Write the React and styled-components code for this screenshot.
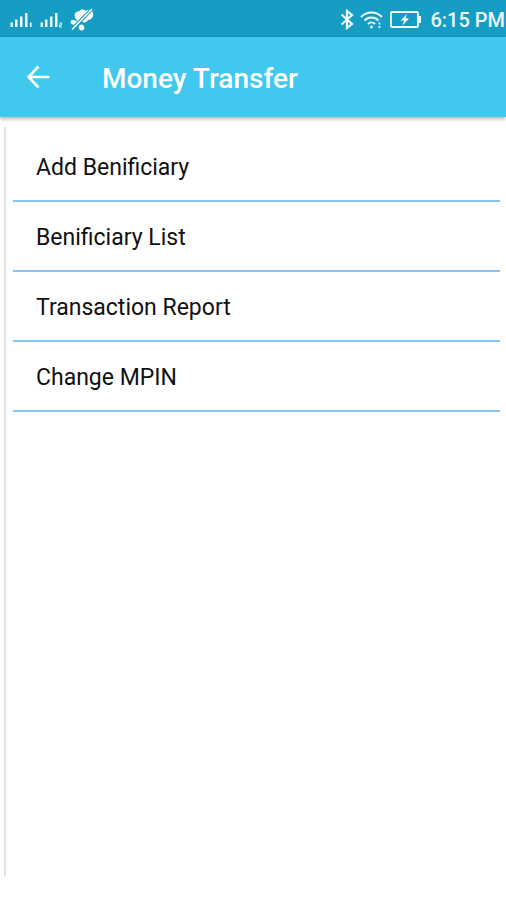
import React from 'react';
import styled, { createGlobalStyle, ThemeProvider } from 'styled-components';

let theme = {
  status: '#159dc3',
  primary: '#40c8ee',
  line: '#85c5f3',
  rule: '#e2e2e2',
  text: '#111',
};

let color = name => props => props.theme[name];

let GlobalStyle = createGlobalStyle`
  * {
    box-sizing: border-box;
  }

  body {
    margin: 0;
    background: #fff;
    font-family: Roboto, "Liberation Sans", sans-serif;
  }
`;

let Screen = styled.div`
  display: flex;
  flex-direction: column;
  min-height: 100vh;
`;

let StatusBar = styled.div`
  display: flex;
  align-items: center;
  justify-content: space-between;
  height: 37px;
  padding: 2px 1px 0 10px;
  overflow: hidden;
  background: ${color('status')};
  color: #eefafd;
`;

let StatusGroup = styled.div`
  display: flex;
  align-items: center;
  gap: ${props => props.$gap};

  svg {
    display: block;
    flex: none;
  }
`;

let Clock = styled.time`
  margin-left: 2px;
  font-size: 20px;
  font-weight: 500;
  line-height: 24px;
  white-space: nowrap;
`;

let AppBar = styled.header`
  display: flex;
  align-items: center;
  gap: 42px;
  height: 80px;
  padding: 0 16px;
  background: ${color('primary')};
  color: #fff;
  box-shadow: 0 2px 4px rgba(0, 0, 0, 0.3);
`;

let BackButton = styled.button`
  display: flex;
  align-items: center;
  justify-content: center;
  width: 44px;
  height: 44px;
  padding: 0;
  border: 0;
  background: none;
  color: inherit;
  cursor: pointer;
`;

let Title = styled.h1`
  margin: 0;
  padding-top: 4px;
  font-size: 28px;
  font-weight: 500;
  line-height: 32px;
`;

let Content = styled.main`
  flex: 1;
  margin: 10px 6px 24px 4px;
  padding-left: 7px;
  border-left: 2px solid ${color('rule')};
`;

let Menu = styled.ul`
  margin: 0;
  padding: 5px 0 0;
  list-style: none;
`;

let MenuItem = styled.li`
  border-bottom: 2px solid ${color('line')};
`;

let MenuLink = styled.a`
  display: block;
  padding: 22px 23px 18px;
  color: ${color('text')};
  font-size: 23px;
  line-height: 28px;
  text-decoration: none;
`;

function SignalIcon({ sim }) {
  return (
    <svg width="24" height="18" viewBox="0 0 24 18" fill="currentColor">
      <rect x="0.5" y="11.5" width="2.500" height="4.500" />
      <rect x="5" y="8.500" width="2.500" height="7.500" />
      <rect x="10" y="5.500" width="2.500" height="10.500" />
      <rect x="15" y="2" width="2.500" height="14" />
      {sim === 1 ? (
        <rect x="20" y="11.5" width="1.500" height="4.5" />
      ) : (
        <path d="M19.500 12h2v2h-2v2h2.400" fill="none" stroke="currentColor" />
      )}
    </svg>
  );
}

function MutedIcon() {
  return (
    <svg width="24" height="24" viewBox="0 0 24 24">
      <g fill="#fff">
        <path d="M5 9C4 5.500 6 3 9 3.500C10.500 1 14 1 15.500 3C18.500 1 22.500 1.500 23 5C24 9 21.500 11.500 18 12C16 15 13.500 15 12 13.500C9 14.500 6.500 13.500 6.500 11.500C5.500 11 5 10 5 9Z" />
        <ellipse cx="4" cy="14.500" rx="3.600" ry="2.200" transform="rotate(15 4 14.500)" />
        <ellipse cx="11.500" cy="19.500" rx="2.800" ry="3" transform="rotate(-20 11.500 19.500)" />
      </g>
      <path d="M2 21.500L21.500 1.500" stroke="#159dc3" strokeWidth="3.600" />
      <path d="M2 21.500L22 1" stroke="#fff" strokeWidth="1.600" />
    </svg>
  );
}

function BluetoothIcon() {
  return (
    <svg width="14" height="22" viewBox="0 0 14 22" fill="none" stroke="currentColor" strokeWidth="2.200">
      <path d="M1.500 5.500L12 15L7 19V2L12 6L1.500 15.500" />
    </svg>
  );
}

function WifiIcon() {
  return (
    <svg width="24" height="20" viewBox="0 0 24 20" fill="none" stroke="currentColor" strokeWidth="2">
      <path d="M1 7C7 1 16 1 22 7" />
      <path d="M4.500 10.500C8.500 6.500 14.500 6.500 18.500 10.500" />
      <path d="M8 14C10 12 13 12 15 14" />
      <circle cx="11.500" cy="17" r="1.600" fill="currentColor" stroke="none" />
      <path d="M19.500 12.500v2M19.500 16v2" strokeWidth="1.800" />
    </svg>
  );
}

function BatteryIcon() {
  return (
    <svg width="32" height="18" viewBox="0 0 32 18">
      <rect x="1" y="1" width="27" height="15" rx="1" fill="none" stroke="currentColor" strokeWidth="1.800" />
      <path d="M28.500 5h2.500v7h-2.500z" fill="currentColor" />
      <path d="M17 3L10.500 9.500H14L12.500 14.500L19 7.500H15.500Z" fill="#fff" />
    </svg>
  );
}

function BackIcon() {
  return (
    <svg width="24" height="24" viewBox="0 0 24 24" fill="none" stroke="currentColor" strokeWidth="2.600">
      <path d="M23.500 12H2.500M12.500 1.500L2.500 12L12.500 22.500" />
    </svg>
  );
}

let items = [
  { id: 'add', label: 'Add Benificiary' },
  { id: 'list', label: 'Benificiary List' },
  { id: 'report', label: 'Transaction Report' },
  { id: 'mpin', label: 'Change MPIN' },
];

function MenuList({ items }) {
  return (
    <Menu>
      {items.map(item => (
        <MenuItem key={item.id}>
          <MenuLink href={`#${item.id}`}>{item.label}</MenuLink>
        </MenuItem>
      ))}
    </Menu>
  );
}

function App() {
  return (
    <ThemeProvider theme={theme}>
      <GlobalStyle />
      <Screen>
        <StatusBar>
          <StatusGroup $gap="6px">
            <SignalIcon sim={1} />
            <SignalIcon sim={2} />
            <MutedIcon />
          </StatusGroup>
          <StatusGroup $gap="6px">
            <BluetoothIcon />
            <WifiIcon />
            <BatteryIcon />
            <Clock>6:15 PM</Clock>
          </StatusGroup>
        </StatusBar>
        <AppBar>
          <BackButton aria-label="Back">
            <BackIcon />
          </BackButton>
          <Title>Money Transfer</Title>
        </AppBar>
        <Content>
          <MenuList items={items} />
        </Content>
      </Screen>
    </ThemeProvider>
  );
}

export default App;
